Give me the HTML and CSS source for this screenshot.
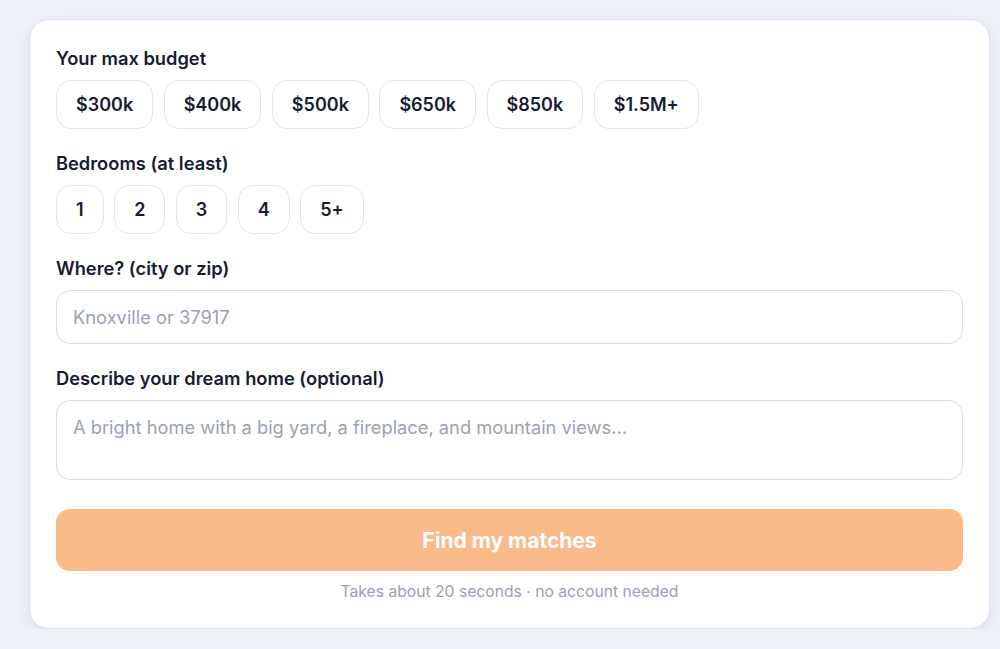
FILE: index.html
```html
<!DOCTYPE html>
<html lang="en">

<head>
    <meta charset="UTF-8">
    <meta name="viewport" content="width=device-width, initial-scale=1.0">
    <title>Find your home</title>
    <link rel="stylesheet" href="styles.css">
</head>

<body>
    <form class="card">
        <div class="field">
            <div class="label">Your max budget</div>
            <div class="chips">
                <button type="button" class="chip">$300k</button>
                <button type="button" class="chip">$400k</button>
                <button type="button" class="chip">$500k</button>
                <button type="button" class="chip">$650k</button>
                <button type="button" class="chip">$850k</button>
                <button type="button" class="chip">$1.5M+</button>
            </div>
        </div>

        <div class="field">
            <div class="label">Bedrooms (at least)</div>
            <div class="chips">
                <button type="button" class="chip">1</button>
                <button type="button" class="chip">2</button>
                <button type="button" class="chip">3</button>
                <button type="button" class="chip">4</button>
                <button type="button" class="chip">5+</button>
            </div>
        </div>

        <div class="field">
            <div class="label">Where? (city or zip)</div>
            <input class="input" type="text" placeholder="Knoxville or 37917">
        </div>

        <div class="field">
            <div class="label">Describe your dream home (optional)</div>
            <textarea class="input textarea" placeholder="A bright home with a big yard, a fireplace, and mountain views..."></textarea>
        </div>

        <button type="submit" class="submit">Find my matches</button>
        <p class="note">Takes about 20 seconds · no account needed</p>
    </form>
</body>

</html>
```

FILE: styles.css
```css
* {
    margin: 0px;
    padding: 0px;
    box-sizing: border-box;
}

body {
    background: #edf0f7;
    font-family: Inter, "Noto Sans", sans-serif;
    color: #161d30;
    padding: 19px 0 0 29px;
}
/**
 * 卡片
 */

.card {
    width: 961px;
    background: #fff;
    border: 1px solid #dde2ee;
    border-radius: 20px;
    padding: 27px 26px 26px;
    box-shadow: 0 6px 16px rgba(40, 55, 100, 0.07);
}

.field {
    margin-bottom: 23px;
}

.label {
    font-size: 18.3px;
    font-weight: 600;
    line-height: 23px;
    margin-bottom: 10px;
}
/**
 * 选项按钮
 */

.chips {
    display: flex;
    gap: 10.5px;
}

.chip {
    height: 49px;
    padding: 0 19px;
    background: #fff;
    border: 1.5px solid #e2e6ef;
    border-radius: 15px;
    font-family: inherit;
    font-size: 18px;
    font-weight: 600;
    color: #161d30;
}
/**
 * 输入框
 */

.input {
    display: block;
    width: 100%;
    height: 54px;
    padding: 0 16px;
    border: 1.5px solid #d9deea;
    border-radius: 14px;
    font-family: inherit;
    font-size: 18.3px;
    color: #161d30;
    outline: none;
}

.input::placeholder {
    color: #9aa2b4;
}

.textarea {
    height: 80px;
    padding: 14px 16px;
    line-height: 24px;
    resize: none;
}
/**
 * 提交
 */

.submit {
    display: block;
    width: 100%;
    height: 62px;
    margin-top: 29px;
    background: #fbba8a;
    border: none;
    border-radius: 14px;
    font-family: inherit;
    font-size: 21px;
    font-weight: 700;
    color: #fff;
}

.note {
    margin-top: 11px;
    text-align: center;
    font-size: 15.7px;
    line-height: 20px;
    color: #9aa1b2;
}
```
